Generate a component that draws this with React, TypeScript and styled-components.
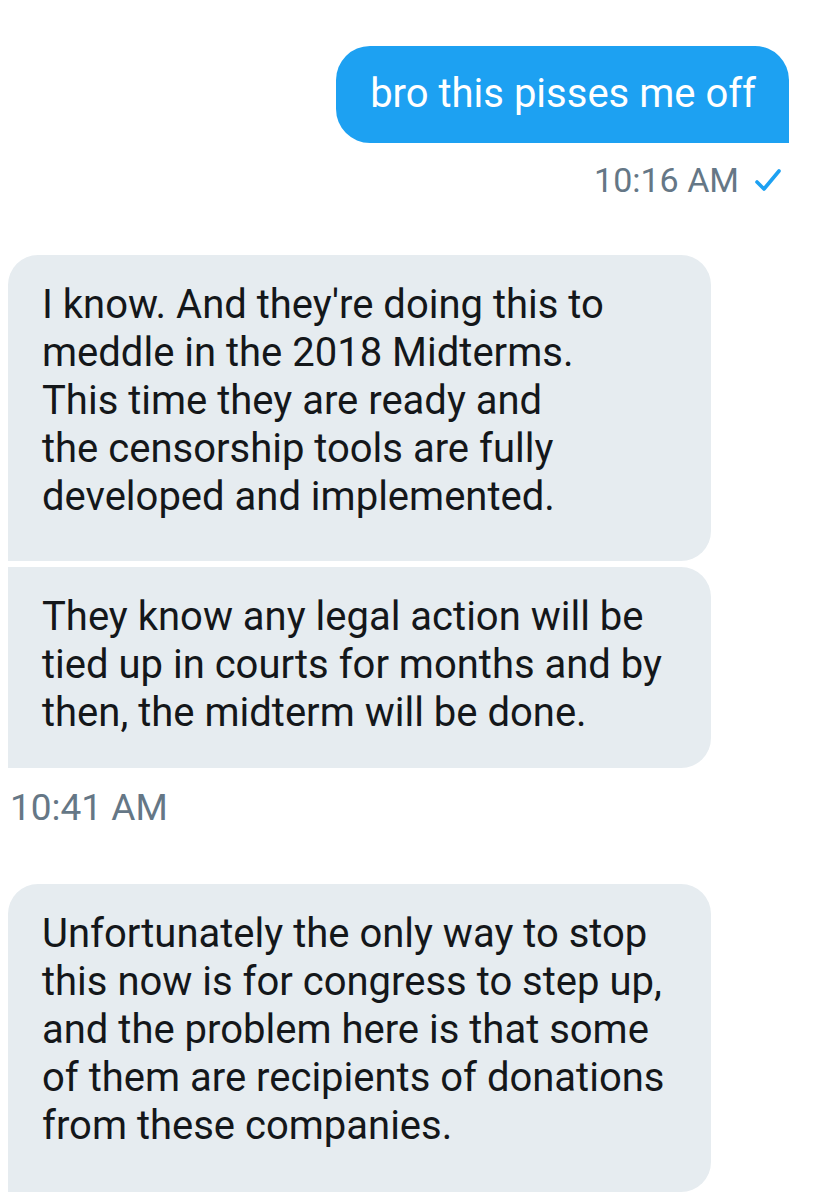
import React from "react";
import styled, { createGlobalStyle } from "styled-components";

const GlobalStyle = createGlobalStyle`
  html, body {
    margin: 0;
    padding: 0;
    background: #ffffff;
  }
  body {
    font-family: Roboto, "Noto Sans", "Liberation Sans", sans-serif;
    -webkit-font-smoothing: antialiased;
  }
`;

const Thread = styled.div`
  display: flex;
  flex-direction: column;
  padding: 46px 32px 0 8px;
  width: 821px;
  box-sizing: border-box;
`;

const Group = styled.div<{ $side: "left" | "right"; $gapTop: number }>`
  display: flex;
  flex-direction: column;
  align-items: ${(p) => (p.$side === "right" ? "flex-end" : "flex-start")};
  gap: 6px;
  margin-top: ${(p) => p.$gapTop}px;
`;

const SentBubble = styled.div`
  background: #1da1f2;
  color: #ffffff;
  font-size: 40px;
  line-height: 48px;
  padding: 24px 33px 25px 34px;
  border-radius: 34px 34px 0 34px;
  white-space: nowrap;
`;

const ReceivedBubble = styled.div<{ $first: boolean; $padBottom: number }>`
  background: #e6ecf0;
  color: #14171a;
  font-size: 40px;
  line-height: 48px;
  width: 703px;
  box-sizing: border-box;
  padding: 26px 34px ${(p) => p.$padBottom}px 34px;
  border-radius: ${(p) => `${p.$first ? 30 : 0}px 30px 30px 0`};
`;

const Line = styled.span`
  display: block;
  white-space: nowrap;
`;

const Meta = styled.div<{ $side: "left" | "right" }>`
  display: flex;
  align-items: center;
  gap: 16px;
  margin-top: ${(p) => (p.$side === "left" ? "20px" : "17px")};
  font-size: ${(p) => (p.$side === "left" ? "37px" : "34px")};
  line-height: 40px;
  color: #657786;
  padding-left: ${(p) => (p.$side === "left" ? "2px" : "0")};
  padding-right: ${(p) => (p.$side === "right" ? "8px" : "0")};
  align-self: ${(p) => (p.$side === "right" ? "flex-end" : "flex-start")};
`;

const Check = () => (
  <svg width="26" height="24" viewBox="0 0 26 24" aria-hidden="true">
    <polyline
      points="2,14 9,21 24,3"
      fill="none"
      stroke="#1da1f2"
      strokeWidth="3.6"
      strokeLinecap="round"
      strokeLinejoin="round"
    />
  </svg>
);

type Msg = { lines: string[]; padBottom: number };

const received1: Msg[] = [
  {
    lines: [
      "I know. And they're doing this to",
      "meddle in the 2018 Midterms.",
      "This time they are ready and",
      "the censorship tools are fully",
      "developed and implemented.",
    ],
    padBottom: 40,
  },
  {
    lines: [
      "They know any legal action will be",
      "tied up in courts for months and by",
      "then, the midterm will be done.",
    ],
    padBottom: 31,
  },
];

const received2: Msg[] = [
  {
    lines: [
      "Unfortunately the only way to stop",
      "this now is for congress to step up,",
      "and the problem here is that some",
      "of them are recipients of donations",
      "from these companies.",
    ],
    padBottom: 42,
  },
];

const Bubbles = ({ groups }: { groups: Msg[] }) => (
  <>
    {groups.map((m, i) => (
      <ReceivedBubble key={i} $first={i === 0} $padBottom={m.padBottom}>
        {m.lines.map((l) => (
          <Line key={l}>{l}</Line>
        ))}
      </ReceivedBubble>
    ))}
  </>
);

export default function App() {
  return (
    <>
      <GlobalStyle />
      <Thread>
        <Group $side="right" $gapTop={0}>
          <SentBubble>bro this pisses me off</SentBubble>
        </Group>
        <Meta $side="right">
          <span>10:16 AM</span>
          <Check />
        </Meta>
        <Group $side="left" $gapTop={55}>
          <Bubbles groups={received1} />
        </Group>
        <Meta $side="left">
          <span>10:41 AM</span>
        </Meta>
        <Group $side="left" $gapTop={56}>
          <Bubbles groups={received2} />
        </Group>
      </Thread>
    </>
  );
}
